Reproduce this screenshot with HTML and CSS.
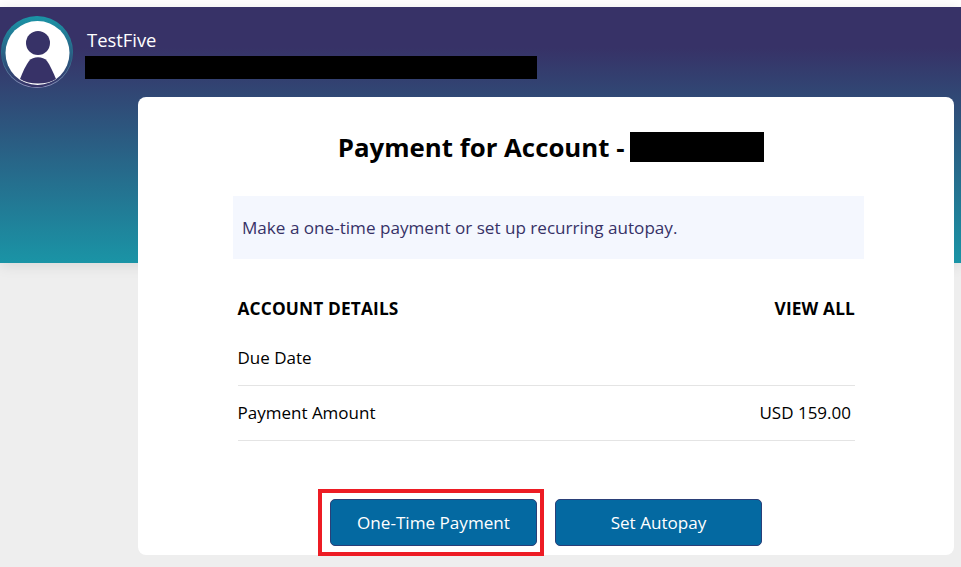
FILE: index.html
```html
<!DOCTYPE html>
<html lang="en">
<head>
<meta charset="utf-8">
<title>Payment for Account</title>
<link rel="stylesheet" href="styles.css">
</head>
<body>
<header class="hero">
  <div class="profile">
    <div class="avatar">
      <svg viewBox="0 0 72 72" width="72" height="72" aria-hidden="true">
        <defs>
          <linearGradient id="ring" x1="0" y1="0" x2="0" y2="1">
            <stop offset="0" stop-color="#1a94a6"/>
            <stop offset="1" stop-color="#373267"/>
          </linearGradient>
          <linearGradient id="edge" x1="0" y1="0" x2="0" y2="1">
            <stop offset="0" stop-color="#1a94a6"/>
            <stop offset="0.6" stop-color="#2a6a88"/>
            <stop offset="1" stop-color="#9a9cc4"/>
          </linearGradient>
          <clipPath id="inner"><circle cx="36.5" cy="37" r="32"/></clipPath>
        </defs>
        <circle cx="36" cy="36" r="36" fill="url(#edge)"/>
        <circle cx="36" cy="36" r="35.3" fill="url(#ring)"/>
        <circle cx="36.5" cy="37" r="32" fill="#fff"/>
        <circle cx="37" cy="27" r="12" fill="#373267"/>
        <path d="M19 63 C22 55 25 49 28 45 C32 40 42 40 46 45 C49 49 52 56 55 63 C46 69 28 69 19 63 Z" fill="#373267" clip-path="url(#inner)"/>
      </svg>
    </div>
    <div class="identity">
      <div class="name">TestFive</div>
      <div class="redacted redacted-email"></div>
    </div>
  </div>
</header>
<main class="card">
  <h1 class="title">Payment for Account - <span class="redacted redacted-account"></span></h1>
  <p class="notice">Make a one-time payment or set up recurring autopay.</p>
  <section class="details">
    <div class="details-head">
      <span>ACCOUNT DETAILS</span>
      <span>VIEW ALL</span>
    </div>
    <div class="row"><span>Due Date</span></div>
    <div class="row"><span>Payment Amount</span><span class="amount">USD 159.00</span></div>
  </section>
  <div class="actions">
    <div class="marked">
      <button class="btn" type="button">One-Time Payment</button>
      <div class="marker"></div>
    </div>
    <button class="btn" type="button">Set Autopay</button>
  </div>
</main>
</body>
</html>
```

FILE: styles.css
```css
* { box-sizing: border-box; }
html, body { height: 100%; }
body {
  margin: 0;
  background: #eeeeee;
  font-family: "Open Sans", "Noto Sans", sans-serif;
  color: #000;
  overflow: hidden;
}
body::before {
  content: "";
  display: block;
  height: 7px;
  background: #fff;
}
.hero {
  height: 256px;
  background: linear-gradient(180deg, #373267 0%, #373267 16%, #1a94a6 100%);
  box-shadow: 0 2px 14px rgba(0, 0, 0, 0.1);
  padding: 9px 0 0 1px;
}
.profile { display: flex; align-items: flex-start; gap: 12px; }
.avatar { width: 72px; height: 72px; flex: none; }
.avatar svg { display: block; }
.identity { padding-top: 12px; }
.name {
  color: #fff;
  font-size: 18.4px;
  line-height: 24px;
  margin-left: 2px;
}
.redacted { background: #000; display: inline-block; }
.redacted-email { display: block; width: 452px; height: 23px; margin-top: 4px; }
.redacted-account { width: 134px; height: 30px; vertical-align: -5px; margin-left: -1px; }
.card {
  position: relative;
  width: 816px;
  height: 458px;
  margin: -166px 0 0 138px;
  background: #fff;
  border-radius: 8px;
  padding: 0 90px 0 95px;
}
.title {
  margin: 0;
  padding: 33px 0 0 5px;
  height: 99px;
  font-size: 25.8px;
  line-height: 34px;
  font-weight: 700;
  text-align: center;
}
.notice {
  margin: 0;
  height: 63px;
  background: #f4f7fe;
  color: #373267;
  font-size: 17.1px;
  line-height: 63px;
  padding-left: 9px;
}
.details { padding: 0 9px 0 4.5px; }
.details-head {
  display: flex;
  justify-content: space-between;
  font-size: 17.3px;
  letter-spacing: 0.15px;
  font-weight: 700;
  line-height: 24px;
  padding-top: 38px;
  height: 71px;
}
.row {
  display: flex;
  justify-content: space-between;
  align-items: center;
  height: 55px;
  font-size: 17px;
  border-bottom: 1px solid #e4e4e4;
  padding: 0 4px 1px 0;
}
.details-head + .row { height: 56px; padding-bottom: 0; }
.actions {
  display: flex;
  gap: 18px;
  margin: 58px 0 0 97px;
}
.marked { position: relative; }
.btn {
  display: block;
  width: 207px;
  height: 47px;
  border: 1px solid #2a3f78;
  border-radius: 5px;
  background: #0469a1;
  color: #fff;
  font-family: inherit;
  font-size: 17.1px;
}
.marker {
  position: absolute;
  left: -12px;
  right: -7px;
  top: -10px;
  bottom: -10px;
  border: 4px solid #ed1c24;
}
```
